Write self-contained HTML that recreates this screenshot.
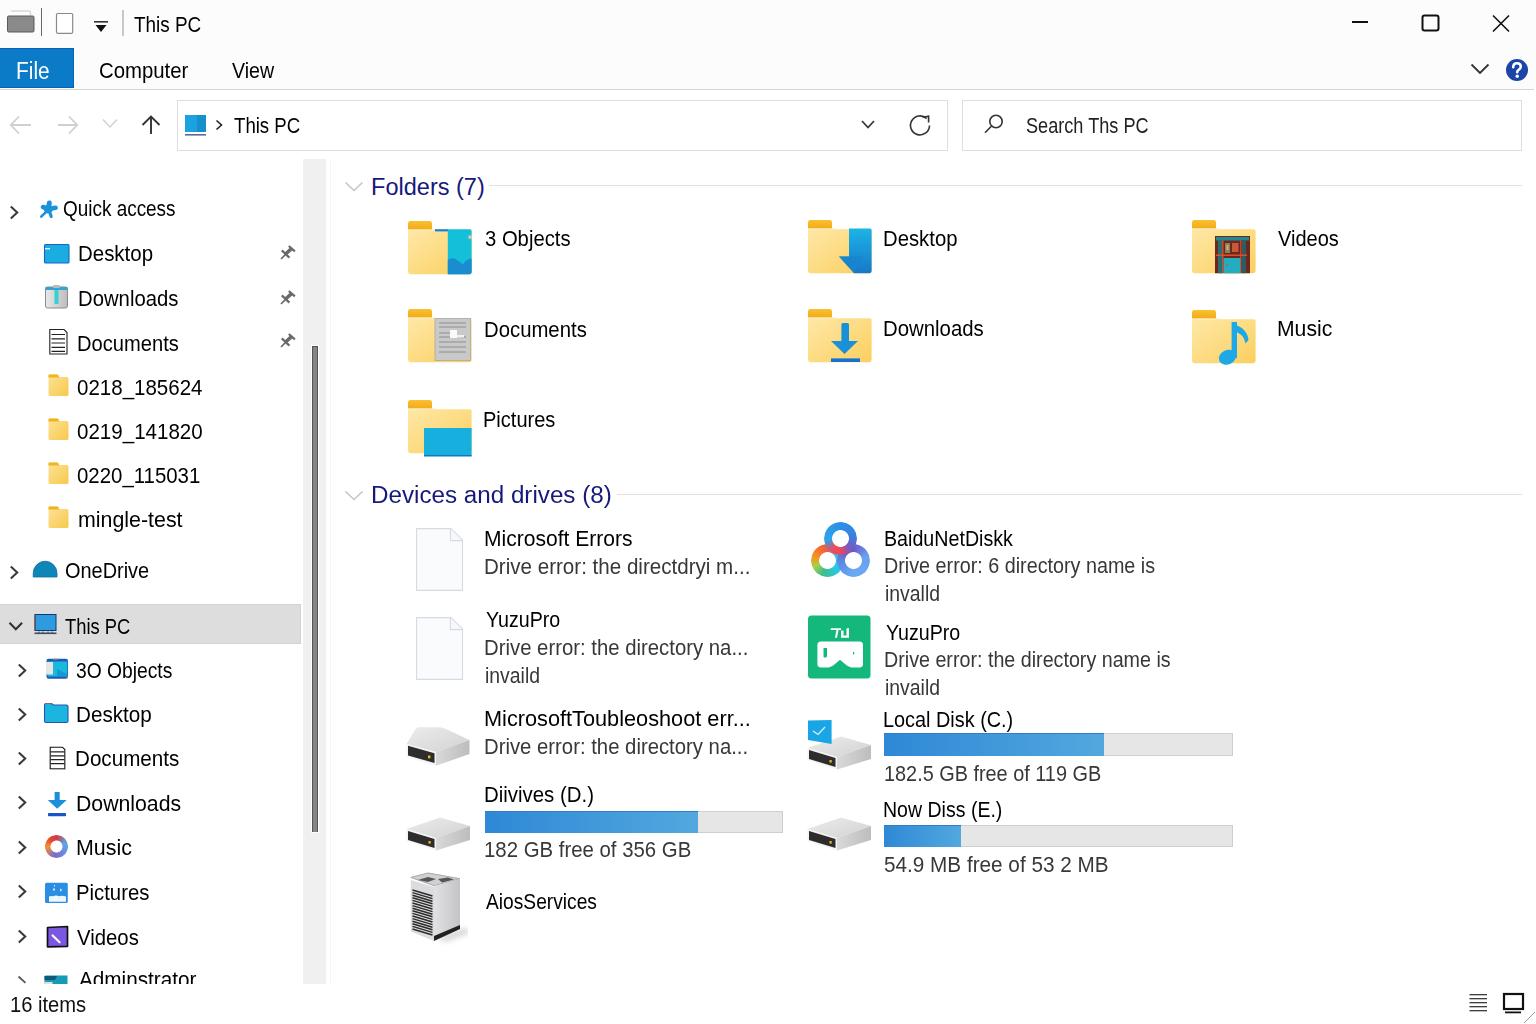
<!DOCTYPE html>
<html><head><meta charset="utf-8"><title>This PC</title>
<style>
html,body{margin:0;padding:0;width:1536px;height:1024px;overflow:hidden;background:#fff;}
body{position:relative;font-family:"Liberation Sans",sans-serif;}
.t{position:absolute;white-space:nowrap;}
.r{position:absolute;display:block;}
</style></head><body>
<div class="r" style="left:0px;top:0px;width:1536px;height:89px;background:#fcfcfc;"></div>
<div class="r" style="left:0px;top:89px;width:1534px;height:1px;background:#d6d6d6;"></div>
<svg class="r" style="left:5px;top:9px;" width="32" height="26" viewBox="0 0 32 26"><path d="M6 2 H24 Q25.5 2 25.5 3.5 V6" fill="none" stroke="#d8d8d8" stroke-width="1.4"/><rect x="2.5" y="7" width="26.5" height="16" rx="1.2" fill="#8a8a8a" stroke="#5a5a5a" stroke-width="1"/></svg>
<div class="r" style="left:41px;top:8px;width:1px;height:28px;background:#666;"></div>
<svg class="r" style="left:54px;top:11px;" width="22" height="24" viewBox="0 0 22 24"><rect x="2.5" y="2.5" width="16.2" height="19.8" rx="1.2" fill="#fff" stroke="#8a8a8a" stroke-width="1.2"/></svg>
<svg class="r" style="left:92px;top:19px;" width="18" height="16" viewBox="0 0 18 16"><rect x="2" y="2" width="14" height="1.6" fill="#333"/><path d="M3.5 6 H14.5 L9 13 Z" fill="#111"/></svg>
<div class="r" style="left:122px;top:10px;width:2px;height:26px;background:#c8c8c8;"></div>
<div class="t " style="left:133.53px;top:15px;font-size:21.5px;line-height:21.5px;color:#000;transform:scaleX(0.8796);transform-origin:0 0;">This PC</div>
<div class="r" style="left:1352px;top:21px;width:16px;height:2px;background:#111;"></div>
<svg class="r" style="left:1419px;top:12px;" width="24" height="22" viewBox="0 0 24 22"><rect x="3.5" y="3.5" width="16" height="15" rx="2" fill="none" stroke="#111" stroke-width="2"/></svg>
<svg class="r" style="left:1490px;top:13px;" width="22" height="22" viewBox="0 0 22 22"><path d="M3 2.5 L19 18.5 M19 2.5 L3 18.5" stroke="#111" stroke-width="1.6" fill="none"/></svg>
<div class="r" style="left:0px;top:48px;width:74px;height:40px;background:#0b7bc8;box-shadow:inset 0 1px #0a5ec0, inset 0 -1px #0a5ec0, inset -1px 0 #0a62c0;"></div>
<div class="t " style="left:16.33px;top:60px;font-size:23px;line-height:23px;color:#fff;transform:scaleX(0.9076);transform-origin:0 0;">File</div>
<div class="t " style="left:98.98px;top:61px;font-size:21.5px;line-height:21.5px;color:#000;transform:scaleX(0.9464);transform-origin:0 0;">Computer</div>
<div class="t " style="left:231.90px;top:61px;font-size:21.5px;line-height:21.5px;color:#000;transform:scaleX(0.9107);transform-origin:0 0;">View</div>
<svg class="r" style="left:1468px;top:60px;" width="24" height="18" viewBox="0 0 24 18"><path d="M3.5 4.5 L12 13 L20.5 4.5" fill="none" stroke="#333" stroke-width="1.8"/></svg>
<svg class="r" style="left:1504px;top:57px;" width="26" height="26" viewBox="0 0 26 26"><circle cx="13" cy="13" r="11" fill="#1b45a6"/><path d="M9.2 10.2 Q9.2 6.2 13 6.2 Q16.8 6.2 16.8 9.6 Q16.8 11.6 14.6 12.8 Q13.2 13.6 13.2 15.2" fill="none" stroke="#fff" stroke-width="2.6" stroke-linecap="round"/><circle cx="13.2" cy="19.3" r="1.7" fill="#fff"/></svg>
<svg class="r" style="left:8px;top:112px;" width="26" height="26" viewBox="0 0 26 26"><path d="M3 13 H23 M11 4.5 L2.8 13 L11 21.5" fill="none" stroke="#cfcfcf" stroke-width="1.8"/></svg>
<svg class="r" style="left:55px;top:112px;" width="26" height="26" viewBox="0 0 26 26"><path d="M3 13 H22 M14 4.5 L22.2 13 L14 21.5" fill="none" stroke="#cfcfcf" stroke-width="1.8"/></svg>
<svg class="r" style="left:100px;top:116px;" width="20" height="16" viewBox="0 0 20 16"><path d="M3 3.5 L10 11 L17 3.5" fill="none" stroke="#d2d2d2" stroke-width="1.5"/></svg>
<svg class="r" style="left:139px;top:113px;" width="24" height="24" viewBox="0 0 24 24"><path d="M12 21 V4 M3.5 12 L12 3.5 L20.5 12" fill="none" stroke="#333" stroke-width="1.9"/></svg>
<div class="r" style="left:177px;top:100px;width:771px;height:51px;background:#fff;box-sizing:border-box;border:1px solid #dedede;"></div>
<svg class="r" style="left:183px;top:113px;" width="26" height="24" viewBox="0 0 26 24"><rect x="2" y="2" width="21" height="17" fill="#1aa3e0"/><rect x="14" y="2" width="9" height="17" fill="#1590cc"/><rect x="2" y="21" width="21" height="1.6" fill="#5a6a9a"/></svg>
<svg class="r" style="left:213px;top:118px;" width="12" height="14" viewBox="0 0 12 14"><path d="M3.5 2.5 L8.5 7 L3.5 11.5" fill="none" stroke="#222" stroke-width="1.6"/></svg>
<div class="t " style="left:233.53px;top:115px;font-size:22px;line-height:22px;color:#000;transform:scaleX(0.8466);transform-origin:0 0;">This PC</div>
<svg class="r" style="left:859px;top:118px;" width="18" height="14" viewBox="0 0 18 14"><path d="M3 3 L9 9.5 L15 3" fill="none" stroke="#333" stroke-width="1.7"/></svg>
<svg class="r" style="left:907px;top:113px;" width="28" height="25" viewBox="0 0 28 25"><path d="M22.5 12.5 A9.5 9.5 0 1 1 19.6 5.6" fill="none" stroke="#333" stroke-width="1.6"/><path d="M15.5 4.2 L21.6 3.2 L21.6 9.6" fill="none" stroke="#333" stroke-width="1.6"/></svg>
<div class="r" style="left:962px;top:100px;width:560px;height:51px;background:#fff;box-sizing:border-box;border:1px solid #dedede;"></div>
<svg class="r" style="left:982px;top:112px;" width="24" height="24" viewBox="0 0 24 24"><circle cx="14" cy="9.5" r="6.2" fill="none" stroke="#333" stroke-width="1.6"/><path d="M9.6 14 L3 20.8" stroke="#333" stroke-width="1.6"/></svg>
<div class="t " style="left:1026.18px;top:116px;font-size:21.5px;line-height:21.5px;color:#222;transform:scaleX(0.8431);transform-origin:0 0;">Search Ths PC</div>
<div class="r" style="left:303px;top:159px;width:23px;height:825px;background:#f0f0f0;"></div>
<div class="r" style="left:311px;top:345px;width:8px;height:488px;background:#fff;"></div>
<div class="r" style="left:312px;top:346px;width:6px;height:486px;background:#858585;box-shadow:inset 1px 0 #555, inset -1px 0 #555, inset 0 1px #555;"></div>
<div class="r" style="left:330px;top:160px;width:1px;height:824px;background:#f4f4f4;"></div>
<div class="r" style="left:0px;top:604px;width:301px;height:40px;background:#dddddd;box-sizing:border-box;border:1px solid #d3d3d3;border-left:0;"></div>
<svg class="r" style="left:8px;top:204px;" width="13" height="18" viewBox="0 0 13 18"><path d="M2.8 2.5 L9.2 8.5 L2.8 14.5" fill="none" stroke="#3a3a3a" stroke-width="2.1"/></svg>
<svg class="r" style="left:34px;top:195px;" width="30" height="30" viewBox="0 0 30 30"><g stroke="#1b93da" stroke-linecap="round" fill="none"><path d="M14.5 14 L15.3 8" stroke-width="5"/><path d="M14.5 14 L9 12" stroke-width="4.6"/><path d="M14.5 14 L21.6 12.8" stroke-width="4.6"/><path d="M13 16 L7.2 21.6" stroke-width="2.6"/><path d="M15 15 L17.2 21.6" stroke-width="3.2"/></g><circle cx="14.3" cy="14.2" r="4.4" fill="#1b93da"/></svg>
<div class="t " style="left:63.15px;top:198px;font-size:22px;line-height:22px;color:#000;transform:scaleX(0.8603);transform-origin:0 0;">Quick access</div>
<svg class="r" style="left:43px;top:243px;" width="28" height="22" viewBox="0 0 28 22"><rect x="1.5" y="1.5" width="24.5" height="18.5" rx="1" fill="#19ade0" stroke="#1f62c6" stroke-width="1.1"/><rect x="2" y="5" width="5" height="1.4" fill="#e8f6fd"/></svg>
<div class="t " style="left:78.36px;top:243px;font-size:22px;line-height:22px;color:#000;transform:scaleX(0.9296);transform-origin:0 0;">Desktop</div>
<svg class="r" style="left:280px;top:245px;" width="16" height="16" viewBox="0 0 16 16"><g stroke="#6a6a6a" stroke-linecap="butt"><path d="M1 14 L6.3 8.6" stroke-width="1.7"/><path d="M1.8 5.4 L9.4 12.6" stroke-width="2.2"/><path d="M5.6 9 L11.8 3.4" stroke-width="3.6"/><path d="M8.8 1 L14.9 6.4" stroke-width="2.2"/></g></svg>
<svg class="r" style="left:44px;top:284px;" width="26" height="26" viewBox="0 0 26 26"><defs><linearGradient id="dlg" x1="0" y1="0" x2="1" y2="0"><stop offset="0" stop-color="#e8e8e8"/><stop offset="1" stop-color="#bdbdbd"/></linearGradient></defs><rect x="1.5" y="3" width="22" height="21" rx="2" fill="url(#dlg)" stroke="#8c8c8c" stroke-width="1"/><rect x="1.5" y="3" width="22" height="3" fill="#3aa0d0"/><rect x="10.5" y="6" width="4" height="14" fill="#36d0d0"/><rect x="9" y="1" width="7" height="3" rx="1" fill="#bbb"/></svg>
<div class="t " style="left:78.38px;top:288px;font-size:22px;line-height:22px;color:#000;transform:scaleX(0.9223);transform-origin:0 0;">Downloads</div>
<svg class="r" style="left:280px;top:290px;" width="16" height="16" viewBox="0 0 16 16"><g stroke="#6a6a6a" stroke-linecap="butt"><path d="M1 14 L6.3 8.6" stroke-width="1.7"/><path d="M1.8 5.4 L9.4 12.6" stroke-width="2.2"/><path d="M5.6 9 L11.8 3.4" stroke-width="3.6"/><path d="M8.8 1 L14.9 6.4" stroke-width="2.2"/></g></svg>
<svg class="r" style="left:48px;top:328px;" width="21" height="28" viewBox="0 0 21 28"><path d="M1.8 1.5 H16 L19 4.5 V26 H1.8 Z" fill="#fff" stroke="#222" stroke-width="1.1"/><path d="M3.5 6.5 H17 M3.5 10.8 H17 M3.5 15 H17 M3.5 19.3 H17 M3.5 23.3 H17" stroke="#222" stroke-width="1.2"/></svg>
<div class="t " style="left:77.39px;top:333px;font-size:22px;line-height:22px;color:#000;transform:scaleX(0.9155);transform-origin:0 0;">Documents</div>
<svg class="r" style="left:280px;top:333px;" width="16" height="16" viewBox="0 0 16 16"><g stroke="#6a6a6a" stroke-linecap="butt"><path d="M1 14 L6.3 8.6" stroke-width="1.7"/><path d="M1.8 5.4 L9.4 12.6" stroke-width="2.2"/><path d="M5.6 9 L11.8 3.4" stroke-width="3.6"/><path d="M8.8 1 L14.9 6.4" stroke-width="2.2"/></g></svg>
<svg class="r" style="left:48px;top:374px;" width="21" height="23" viewBox="0 0 21 23"><defs><linearGradient id="sfg" x1="0" y1="0" x2="1" y2="1"><stop offset="0" stop-color="#fde49a"/><stop offset="1" stop-color="#f7c84a"/></linearGradient></defs><path d="M0.5 1.5 Q0.5 0.5 1.5 0.5 H9 Q10 0.5 10.5 1.5 L11 3 H19 Q20.5 3 20.5 4.5 V20.5 Q20.5 22 19 22 H2 Q0.5 22 0.5 20.5 Z" fill="url(#sfg)"/><path d="M0.5 1.5 Q0.5 0.5 1.5 0.5 H9 Q10 0.5 10.5 1.5 L11 3.5 H0.5 Z" fill="#f2b321"/></svg>
<div class="t " style="left:77.18px;top:377px;font-size:22px;line-height:22px;color:#000;transform:scaleX(0.9324);transform-origin:0 0;">0218_185624</div>
<svg class="r" style="left:48px;top:418px;" width="21" height="23" viewBox="0 0 21 23"><defs><linearGradient id="sfg" x1="0" y1="0" x2="1" y2="1"><stop offset="0" stop-color="#fde49a"/><stop offset="1" stop-color="#f7c84a"/></linearGradient></defs><path d="M0.5 1.5 Q0.5 0.5 1.5 0.5 H9 Q10 0.5 10.5 1.5 L11 3 H19 Q20.5 3 20.5 4.5 V20.5 Q20.5 22 19 22 H2 Q0.5 22 0.5 20.5 Z" fill="url(#sfg)"/><path d="M0.5 1.5 Q0.5 0.5 1.5 0.5 H9 Q10 0.5 10.5 1.5 L11 3.5 H0.5 Z" fill="#f2b321"/></svg>
<div class="t " style="left:77.18px;top:421px;font-size:22px;line-height:22px;color:#000;transform:scaleX(0.9339);transform-origin:0 0;">0219_141820</div>
<svg class="r" style="left:48px;top:462px;" width="21" height="23" viewBox="0 0 21 23"><defs><linearGradient id="sfg" x1="0" y1="0" x2="1" y2="1"><stop offset="0" stop-color="#fde49a"/><stop offset="1" stop-color="#f7c84a"/></linearGradient></defs><path d="M0.5 1.5 Q0.5 0.5 1.5 0.5 H9 Q10 0.5 10.5 1.5 L11 3 H19 Q20.5 3 20.5 4.5 V20.5 Q20.5 22 19 22 H2 Q0.5 22 0.5 20.5 Z" fill="url(#sfg)"/><path d="M0.5 1.5 Q0.5 0.5 1.5 0.5 H9 Q10 0.5 10.5 1.5 L11 3.5 H0.5 Z" fill="#f2b321"/></svg>
<div class="t " style="left:77.18px;top:465px;font-size:22px;line-height:22px;color:#000;transform:scaleX(0.9274);transform-origin:0 0;">0220_115031</div>
<svg class="r" style="left:48px;top:506px;" width="21" height="23" viewBox="0 0 21 23"><defs><linearGradient id="sfg" x1="0" y1="0" x2="1" y2="1"><stop offset="0" stop-color="#fde49a"/><stop offset="1" stop-color="#f7c84a"/></linearGradient></defs><path d="M0.5 1.5 Q0.5 0.5 1.5 0.5 H9 Q10 0.5 10.5 1.5 L11 3 H19 Q20.5 3 20.5 4.5 V20.5 Q20.5 22 19 22 H2 Q0.5 22 0.5 20.5 Z" fill="url(#sfg)"/><path d="M0.5 1.5 Q0.5 0.5 1.5 0.5 H9 Q10 0.5 10.5 1.5 L11 3.5 H0.5 Z" fill="#f2b321"/></svg>
<div class="t " style="left:78.01px;top:509px;font-size:22px;line-height:22px;color:#000;transform:scaleX(0.9713);transform-origin:0 0;">mingle-test</div>
<svg class="r" style="left:8px;top:564px;" width="13" height="18" viewBox="0 0 13 18"><path d="M2.8 2.5 L9.2 8.5 L2.8 14.5" fill="none" stroke="#3a3a3a" stroke-width="2.1"/></svg>
<svg class="r" style="left:32px;top:560px;" width="27" height="19" viewBox="0 0 27 19"><path d="M1.2 17 V13.5 A11.9 12.3 0 0 1 25 13.5 V17 Z" fill="#0f86b8" stroke="#0b6fa0" stroke-width="0.8"/></svg>
<div class="t " style="left:65.10px;top:560px;font-size:22px;line-height:22px;color:#000;transform:scaleX(0.9058);transform-origin:0 0;">OneDrive</div>
<svg class="r" style="left:7px;top:620px;" width="18" height="13" viewBox="0 0 18 13"><path d="M2.5 2.8 L8.8 9.2 L15.1 2.8" fill="none" stroke="#333" stroke-width="2.1"/></svg>
<svg class="r" style="left:33px;top:613px;" width="26" height="24" viewBox="0 0 26 24"><rect x="2" y="1.5" width="21" height="16" fill="#2c9be0" stroke="#0d3a70" stroke-width="1"/><rect x="1.5" y="19.5" width="22" height="1.6" fill="#404a60"/><path d="M6 20 V18.5 M10 20 V18.5 M15 20 V18.5 M19 20 V18.5" stroke="#404a60" stroke-width="1"/><rect x="1" y="2" width="1.2" height="16" fill="#b04020" opacity=".6"/></svg>
<div class="t " style="left:64.54px;top:616px;font-size:22px;line-height:22px;color:#000;transform:scaleX(0.8336);transform-origin:0 0;">This PC</div>
<svg class="r" style="left:16px;top:662px;" width="13" height="18" viewBox="0 0 13 18"><path d="M2.8 2.5 L9.2 8.5 L2.8 14.5" fill="none" stroke="#3a3a3a" stroke-width="2.1"/></svg>
<svg class="r" style="left:45px;top:657px;" width="24" height="23" viewBox="0 0 24 23"><rect x="1.5" y="1.8" width="21.5" height="20" rx="2" fill="#1a5cb8"/><rect x="2.5" y="4.5" width="19.8" height="15" fill="#17b9dc"/><rect x="1" y="5" width="7" height="12.5" fill="#e6e6e6"/><path d="M12 12 L22.3 17 V19.5 H12 Z" fill="#1690d0" opacity=".8"/><path d="M20.5 21.8 L23 19.5 V21.8 Z" fill="#f0a050"/><rect x="8" y="1.5" width="5" height="1" fill="#e0a070"/></svg>
<div class="t " style="left:76.23px;top:660px;font-size:22px;line-height:22px;color:#000;transform:scaleX(0.8749);transform-origin:0 0;">3O Objects</div>
<svg class="r" style="left:16px;top:706px;" width="13" height="18" viewBox="0 0 13 18"><path d="M2.8 2.5 L9.2 8.5 L2.8 14.5" fill="none" stroke="#3a3a3a" stroke-width="2.1"/></svg>
<svg class="r" style="left:43px;top:702px;" width="27" height="22" viewBox="0 0 27 22"><path d="M1.5 3 Q1.5 1.5 3 1.5 H8.5 L10.5 3 H23.5 Q25 3 25 4.5 V19 Q25 20.5 23.5 20.5 H3 Q1.5 20.5 1.5 19 Z" fill="#1ab6e0" stroke="#2a56aa" stroke-width="1.1"/><path d="M2.2 1.6 H8" stroke="#c0602a" stroke-width="1"/></svg>
<div class="t " style="left:76.35px;top:704px;font-size:22px;line-height:22px;color:#000;transform:scaleX(0.9399);transform-origin:0 0;">Desktop</div>
<svg class="r" style="left:16px;top:750px;" width="13" height="18" viewBox="0 0 13 18"><path d="M2.8 2.5 L9.2 8.5 L2.8 14.5" fill="none" stroke="#3a3a3a" stroke-width="2.1"/></svg>
<svg class="r" style="left:48px;top:745px;" width="19" height="26" viewBox="0 0 19 26"><path d="M2.2 2.2 H14.5 L16.8 4.5 V23.8 H2.2 Z" fill="#fff" stroke="#111" stroke-width="1.1"/><path d="M16.8 4 V23.8 H3" fill="none" stroke="#aaa" stroke-width="0.8" transform="translate(0.6 0.6)"/><path d="M2.5 6.8 H16.5 M2.5 10.8 H16.5 M2.5 14.7 H16.5 M2.5 18.6 H16.5" stroke="#222" stroke-width="1.2"/></svg>
<div class="t " style="left:75.35px;top:748px;font-size:22px;line-height:22px;color:#000;transform:scaleX(0.9376);transform-origin:0 0;">Documents</div>
<svg class="r" style="left:16px;top:794px;" width="13" height="18" viewBox="0 0 13 18"><path d="M2.8 2.5 L9.2 8.5 L2.8 14.5" fill="none" stroke="#3a3a3a" stroke-width="2.1"/></svg>
<svg class="r" style="left:46px;top:790px;" width="23" height="28" viewBox="0 0 23 28"><rect x="8.6" y="2" width="5.1" height="9" fill="#1a90dc"/><path d="M1.8 10 H20.7 L11.2 18.8 Z" fill="#1a90dc"/><rect x="2" y="23" width="18" height="3.2" rx="0.8" fill="#1a55c8"/></svg>
<div class="t " style="left:76.30px;top:793px;font-size:22px;line-height:22px;color:#000;transform:scaleX(0.9656);transform-origin:0 0;">Downloads</div>
<svg class="r" style="left:16px;top:839px;" width="13" height="18" viewBox="0 0 13 18"><path d="M2.8 2.5 L9.2 8.5 L2.8 14.5" fill="none" stroke="#3a3a3a" stroke-width="2.1"/></svg>
<div class="r" style="left:45px;top:835px;width:23px;height:22.5px;border-radius:50%;background:conic-gradient(#d03a48 0deg,#5aa8e8 70deg,#6a90e0 120deg,#7a6ad0 190deg,#f59030 270deg,#e8452c 320deg,#d03a48 360deg);-webkit-mask:radial-gradient(circle at center, transparent 5.6px, #000 6.4px);mask:radial-gradient(circle at center, transparent 5.6px, #000 6.4px);"></div>
<div class="t " style="left:76.29px;top:837px;font-size:22px;line-height:22px;color:#000;transform:scaleX(0.9726);transform-origin:0 0;">Music</div>
<svg class="r" style="left:16px;top:883px;" width="13" height="18" viewBox="0 0 13 18"><path d="M2.8 2.5 L9.2 8.5 L2.8 14.5" fill="none" stroke="#3a3a3a" stroke-width="2.1"/></svg>
<svg class="r" style="left:43px;top:880px;" width="26" height="25" viewBox="0 0 26 25"><rect x="2" y="2.7" width="22.8" height="20.3" rx="1.5" fill="#2a8fe4"/><path d="M6 16.5 Q8 15.5 10 16.3 Q13 15 16 16.2 Q19 15.4 23 16.5 V21.8 H6 Z" fill="#eef6fc"/><rect x="10" y="8.5" width="2" height="2" fill="#cfe8fa"/><rect x="17" y="8.8" width="1.6" height="2.4" fill="#cfe8fa"/><rect x="11" y="5" width="1" height="1.5" fill="#cfe8fa"/></svg>
<div class="t " style="left:76.37px;top:882px;font-size:22px;line-height:22px;color:#000;transform:scaleX(0.9234);transform-origin:0 0;">Pictures</div>
<svg class="r" style="left:16px;top:928px;" width="13" height="18" viewBox="0 0 13 18"><path d="M2.8 2.5 L9.2 8.5 L2.8 14.5" fill="none" stroke="#3a3a3a" stroke-width="2.1"/></svg>
<svg class="r" style="left:45px;top:924px;" width="25" height="25" viewBox="0 0 25 25"><path d="M2.5 3.5 L22.5 2.5 V22.3 L2.5 22.8 Z" fill="#7a58e2" stroke="#111" stroke-width="1.7" stroke-linejoin="round"/><path d="M7.6 11.5 L14.6 18.2" stroke="#fff" stroke-width="2.2" stroke-linecap="round"/></svg>
<div class="t " style="left:76.90px;top:927px;font-size:22px;line-height:22px;color:#000;transform:scaleX(0.9242);transform-origin:0 0;">Videos</div>
<div class="r" style="left:0;top:964px;width:303px;height:20px;overflow:hidden;">
<svg class="r" style="left:16px;top:10px;" width="12" height="12" viewBox="0 0 12 12"><path d="M2.5 2.5 L9.5 8.8" stroke="#555" stroke-width="1.7"/></svg>
<svg class="r" style="left:43px;top:10px;" width="27" height="12" viewBox="0 0 27 12"><path d="M1.5 2.5 Q1.5 1.5 3 1.5 H24.5 V12 H1.5 Z" fill="#159ab8"/><path d="M1.5 2 H14 L12 6 H1.5 Z" fill="#0d5a78"/><rect x="1.5" y="8" width="8" height="4" fill="#e8e0d8"/></svg>
</div>
<div class="r" style="left:0;top:964px;width:303px;height:20px;overflow:hidden;">
<div class="t " style="left:78.90px;top:5px;font-size:22px;line-height:22px;color:#000;transform:scaleX(0.9421);transform-origin:0 0;">Adminstrator</div>
</div>
<div class="t " style="left:10.49px;top:995px;font-size:21.5px;line-height:21.5px;color:#111;transform:scaleX(0.9378);transform-origin:0 0;">16 items</div>
<svg class="r" style="left:1467px;top:992px;" width="22" height="22" viewBox="0 0 22 22"><path d="M2.5 2.8 H20 M2.5 6.8 H20 M2.5 10.8 H20 M2.5 14.7 H20 M2.5 18.7 H20" stroke="#000" stroke-width="1.05"/></svg>
<svg class="r" style="left:1501px;top:991px;" width="25" height="24" viewBox="0 0 25 24"><rect x="3" y="3" width="19" height="15" fill="#fff" stroke="#111" stroke-width="2.2"/><rect x="4" y="20.5" width="16" height="1.8" fill="#111"/></svg>
<svg class="r" style="left:343px;top:180px;" width="22" height="14" viewBox="0 0 22 14"><path d="M2.5 2.5 L11 10.5 L19.5 2.5" fill="none" stroke="#c4c4c4" stroke-width="1.5"/></svg>
<div class="t " style="left:371.12px;top:176px;font-size:23.5px;line-height:23.5px;color:#15197a;">Folders (7)</div>
<div class="r" style="left:489px;top:185px;width:1033px;height:1px;background:#e2e2e2;"></div>
<svg class="r" style="left:343px;top:489px;" width="22" height="14" viewBox="0 0 22 14"><path d="M2.5 2.5 L11 10.5 L19.5 2.5" fill="none" stroke="#c4c4c4" stroke-width="1.5"/></svg>
<div class="t " style="left:371.06px;top:484px;font-size:23.5px;line-height:23.5px;color:#15197a;transform:scaleX(1.0299);transform-origin:0 0;">Devices and drives (8)</div>
<div class="r" style="left:617px;top:494px;width:905px;height:1px;background:#e2e2e2;"></div>
<svg width="0" height="0" style="position:absolute"><defs><linearGradient id="fb" x1="0" y1="0" x2="1" y2="1"><stop offset="0" stop-color="#fee8a8"/><stop offset="1" stop-color="#fbcf5e"/></linearGradient><linearGradient id="ft" x1="0" y1="0" x2="0" y2="1"><stop offset="0" stop-color="#f9c030"/><stop offset="1" stop-color="#f3a918"/></linearGradient><linearGradient id="bl" x1="0" y1="0" x2="0" y2="1"><stop offset="0" stop-color="#1cb4e6"/><stop offset="1" stop-color="#1778c8"/></linearGradient></defs></svg>
<svg class="r" style="left:408px;top:221px;" width="66" height="58" viewBox="0 0 66 58"><path d="M0 2.5 Q0 0 2.5 0 H21.5 Q24 0 24 2.5 V9 H0 Z" fill="url(#ft)"/><path d="M0 8.5 H27 L28 9.2 H62 Q63.6 9.2 63.6 10.8 V50.8 Q63.6 53.2 61.2 53.2 H2.4 Q0 53.2 0 50.8 Z" fill="url(#fb)"/><path d="M0 9 H26.5" stroke="#fdf0c8" stroke-width="1"/><path d="M27 8.6 H40 V53.2 H27 Z" fill="none"/><rect x="27" y="8.2" width="13" height="2.2" fill="#1a80d6"/><path d="M39.8 8.2 H62 Q63.6 8.2 63.6 9.8 V51 Q63.6 53.2 61.4 53.2 H39.8 Z" fill="#14bfd9"/><path d="M39.8 39 Q44 36 48 38.5 Q52 41 55 43.5 Q58 38 63.6 37.5 V51 Q63.6 53.2 61.4 53.2 H39.8 Z" fill="#1a8dd0"/><rect x="60.5" y="14.5" width="3.2" height="3.2" fill="#f4c79c"/></svg>
<div class="t " style="left:485.19px;top:228px;font-size:22px;line-height:22px;color:#000;transform:scaleX(0.9200);transform-origin:0 0;">3 Objects</div>
<svg class="r" style="left:808px;top:220px;" width="66" height="58" viewBox="0 0 66 58"><path d="M0 2.5 Q0 0 2.5 0 H21.5 Q24 0 24 2.5 V9 H0 Z" fill="url(#ft)"/><path d="M0 8.5 H27 L28 9.2 H62 Q63.6 9.2 63.6 10.8 V50.8 Q63.6 53.2 61.2 53.2 H2.4 Q0 53.2 0 50.8 Z" fill="url(#fb)"/><path d="M0 9 H26.5" stroke="#fdf0c8" stroke-width="1"/><path d="M41 8.4 H62 Q63.6 8.4 63.6 10 V51 Q63.6 53.2 61.4 53.2 H46.2 L31 36.6 H41 Z" fill="url(#bl)"/><path d="M31 36.6 H55 L46.2 53.2 Z" fill="#1a84cc" opacity=".85"/></svg>
<div class="t " style="left:883.38px;top:228px;font-size:22px;line-height:22px;color:#000;transform:scaleX(0.9232);transform-origin:0 0;">Desktop</div>
<svg class="r" style="left:1192px;top:220px;" width="66" height="58" viewBox="0 0 66 58"><path d="M0 2.5 Q0 0 2.5 0 H21.5 Q24 0 24 2.5 V9 H0 Z" fill="url(#ft)"/><path d="M0 8.5 H27 L28 9.2 H62 Q63.6 9.2 63.6 10.8 V50.8 Q63.6 53.2 61.2 53.2 H2.4 Q0 53.2 0 50.8 Z" fill="url(#fb)"/><path d="M0 9 H26.5" stroke="#fdf0c8" stroke-width="1"/><rect x="23" y="16" width="35" height="37.2" fill="#6e2620"/><rect x="24" y="17" width="33" height="3.5" fill="#1e8a90"/><rect x="26" y="20" width="4" height="33.2" fill="#2a6e70"/><rect x="50" y="20" width="4" height="33.2" fill="#2a5e60"/><rect x="30" y="20" width="1.5" height="33" fill="#d04a30"/><rect x="48" y="20" width="1.5" height="33" fill="#c04030"/><rect x="33" y="23" width="5" height="10" fill="#8a8060"/><rect x="34.5" y="25" width="2" height="5" fill="#d8b060"/><rect x="40" y="23" width="6.5" height="9" fill="#c8583a"/><rect x="24" y="34.5" width="31" height="1.5" fill="#d8502a"/><rect x="31.5" y="38" width="17" height="15.2" fill="#22aebe"/><circle cx="35" cy="45" r="0.9" fill="#e05030"/></svg>
<div class="t " style="left:1277.90px;top:228px;font-size:22px;line-height:22px;color:#000;transform:scaleX(0.9091);transform-origin:0 0;">Videos</div>
<svg class="r" style="left:408px;top:309px;" width="66" height="58" viewBox="0 0 66 58"><path d="M0 2.5 Q0 0 2.5 0 H21.5 Q24 0 24 2.5 V9 H0 Z" fill="url(#ft)"/><path d="M0 8.5 H27 L28 9.2 H62 Q63.6 9.2 63.6 10.8 V50.8 Q63.6 53.2 61.2 53.2 H2.4 Q0 53.2 0 50.8 Z" fill="url(#fb)"/><path d="M0 9 H26.5" stroke="#fdf0c8" stroke-width="1"/><rect x="27" y="9.5" width="35.6" height="42" fill="#c9c9c9"/><rect x="27" y="9.5" width="35.6" height="42" fill="none" stroke="#a9a9a9" stroke-width=".8"/><path d="M31 14 H58 M31 18 H58 M31 24 H48 M31 28 H58 M31 33 H58 M31 38 H58 M31 43 H58" stroke="#8e8e8e" stroke-width="1"/><rect x="42" y="21" width="7" height="8" fill="#fafafa"/><rect x="49" y="26" width="7" height="2.5" fill="#f2f2f2"/></svg>
<div class="t " style="left:484.37px;top:319px;font-size:22px;line-height:22px;color:#000;transform:scaleX(0.9238);transform-origin:0 0;">Documents</div>
<svg class="r" style="left:808px;top:309px;" width="66" height="58" viewBox="0 0 66 58"><path d="M0 2.5 Q0 0 2.5 0 H21.5 Q24 0 24 2.5 V9 H0 Z" fill="url(#ft)"/><path d="M0 8.5 H27 L28 9.2 H62 Q63.6 9.2 63.6 10.8 V50.8 Q63.6 53.2 61.2 53.2 H2.4 Q0 53.2 0 50.8 Z" fill="url(#fb)"/><path d="M0 9 H26.5" stroke="#fdf0c8" stroke-width="1"/><rect x="33.4" y="14" width="7.6" height="20" rx="1.5" fill="#1a90d8"/><path d="M23 32 H50 L36.5 45 Z" fill="#1a90d8"/><rect x="23" y="49.4" width="29" height="3.6" fill="#1a6fd0"/></svg>
<div class="t " style="left:883.37px;top:318px;font-size:22px;line-height:22px;color:#000;transform:scaleX(0.9260);transform-origin:0 0;">Downloads</div>
<svg class="r" style="left:1192px;top:310px;" width="66" height="58" viewBox="0 0 66 58"><path d="M0 2.5 Q0 0 2.5 0 H21.5 Q24 0 24 2.5 V9 H0 Z" fill="url(#ft)"/><path d="M0 8.5 H27 L28 9.2 H62 Q63.6 9.2 63.6 10.8 V50.8 Q63.6 53.2 61.2 53.2 H2.4 Q0 53.2 0 50.8 Z" fill="url(#fb)"/><path d="M0 9 H26.5" stroke="#fdf0c8" stroke-width="1"/><rect x="39.6" y="12" width="5.4" height="36" fill="#1fa8e6"/><path d="M42 14.5 Q55 18 56.5 30 L53.5 33.5 Q52 24 42 21 Z" fill="#1fa8e6"/><ellipse cx="35.5" cy="47.2" rx="9" ry="7.2" transform="rotate(-25 35.5 47.2)" fill="#1fa8e6"/></svg>
<div class="t " style="left:1277.31px;top:318px;font-size:22px;line-height:22px;color:#000;transform:scaleX(0.9617);transform-origin:0 0;">Music</div>
<svg class="r" style="left:408px;top:400px;" width="66" height="58" viewBox="0 0 66 58"><path d="M0 2.5 Q0 0 2.5 0 H21.5 Q24 0 24 2.5 V9 H0 Z" fill="url(#ft)"/><path d="M0 8.5 H27 L28 9.2 H62 Q63.6 9.2 63.6 10.8 V50.8 Q63.6 53.2 61.2 53.2 H2.4 Q0 53.2 0 50.8 Z" fill="url(#fb)"/><path d="M0 9 H26.5" stroke="#fdf0c8" stroke-width="1"/><rect x="16" y="28" width="47.6" height="28.2" fill="#17b0de"/><rect x="16" y="55" width="47.6" height="1.4" fill="#1178c0"/></svg>
<div class="t " style="left:483.40px;top:409px;font-size:22px;line-height:22px;color:#000;transform:scaleX(0.9104);transform-origin:0 0;">Pictures</div>
<svg width="0" height="0" style="position:absolute"><defs><linearGradient id="dtop" x1="0" y1="0" x2="1" y2="1"><stop offset="0" stop-color="#ececec"/><stop offset="1" stop-color="#d2d2d2"/></linearGradient><linearGradient id="dside" x1="0" y1="0" x2="1" y2="0"><stop offset="0" stop-color="#d9d9d9"/><stop offset="1" stop-color="#bdbdbd"/></linearGradient><linearGradient id="pbar" x1="0" y1="0" x2="1" y2="0"><stop offset="0" stop-color="#2b86d6"/><stop offset="1" stop-color="#4aa6dc"/></linearGradient><linearGradient id="srv" x1="0" y1="0" x2="1" y2="0"><stop offset="0" stop-color="#e2e2e4"/><stop offset="1" stop-color="#c4c4c8"/></linearGradient><linearGradient id="pg" x1="0" y1="0" x2="1" y2="1"><stop offset="0" stop-color="#fbfbfd"/><stop offset="1" stop-color="#f0f1f4"/></linearGradient></defs></svg>
<svg class="r" style="left:416px;top:528px;" width="48" height="64" viewBox="0 0 48 64"><path d="M0.6 0.6 H35 L46.5 12 V62.4 H0.6 Z" fill="#fafbfd" stroke="#d6dae3" stroke-width="1.1"/><path d="M34.4 0.8 V12.6 H46.3" fill="#f6f7fa" stroke="#d6dae3" stroke-width="1.1"/></svg>
<div class="t " style="left:484.32px;top:529px;font-size:21.5px;line-height:21.5px;color:#000;transform:scaleX(0.9785);transform-origin:0 0;">Microsoft Errors</div>
<div class="t " style="left:484.35px;top:557px;font-size:21.5px;line-height:21.5px;color:#383838;transform:scaleX(0.9568);transform-origin:0 0;">Drive error: the directdryi m...</div>
<svg class="r" style="left:416px;top:617px;" width="48" height="64" viewBox="0 0 48 64"><path d="M0.6 0.6 H35 L46.5 12 V62.4 H0.6 Z" fill="#fafbfd" stroke="#d6dae3" stroke-width="1.1"/><path d="M34.4 0.8 V12.6 H46.3" fill="#f6f7fa" stroke="#d6dae3" stroke-width="1.1"/></svg>
<div class="t " style="left:485.51px;top:610px;font-size:21.5px;line-height:21.5px;color:#000;transform:scaleX(0.9140);transform-origin:0 0;">YuzuPro</div>
<div class="t " style="left:484.37px;top:638px;font-size:21.5px;line-height:21.5px;color:#383838;transform:scaleX(0.9455);transform-origin:0 0;">Drive error: the directory na...</div>
<div class="t " style="left:484.74px;top:666px;font-size:21.5px;line-height:21.5px;color:#383838;transform:scaleX(0.9027);transform-origin:0 0;">invaild</div>
<svg class="r" style="left:406px;top:726px;" width="66" height="44" viewBox="0 0 66 44"><path d="M0.5 18 L9.5 3 Q10.5 1.2 13 1.2 H33.7 Q36 1.2 40 3 L63.5 14 L30 26 Z" fill="url(#dtop)"/><path d="M30 26 L63.5 14 V28 L30 39.8 Z" fill="url(#dside)"/><path d="M0.5 18 L30 26 V39.8 L0.5 31 Z" fill="#f4f4f4"/><path d="M2 19.8 L28.5 27.2 V37 L2 29.5 Z" fill="#2d2d2d"/><rect x="22" y="29.5" width="2.4" height="2.8" fill="#f2b620"/></svg>
<div class="t " style="left:484.26px;top:709px;font-size:21.5px;line-height:21.5px;color:#000;transform:scaleX(1.0101);transform-origin:0 0;">MicrosoftToubleoshoot err...</div>
<div class="t " style="left:484.38px;top:737px;font-size:21.5px;line-height:21.5px;color:#383838;transform:scaleX(0.9447);transform-origin:0 0;">Drive error: the directory na...</div>
<svg class="r" style="left:406px;top:817px;" width="66" height="44" viewBox="0 0 66 44"><path d="M0.5 12 L34 0.5 L64 9 L30 21 Z" fill="url(#dtop)"/><path d="M30 21 L64 9 V23 L30 33.5 Z" fill="url(#dside)"/><path d="M0.5 12 L30 21 V33.5 L0.5 24 Z" fill="#f4f4f4"/><path d="M2 14 L28.5 22 V31 L2 23 Z" fill="#2d2d2d"/><rect x="22.5" y="24" width="2.2" height="2.6" fill="#f2b620"/></svg>
<div class="t " style="left:484.37px;top:785px;font-size:21.5px;line-height:21.5px;color:#000;transform:scaleX(0.9489);transform-origin:0 0;">Diivives (D.)</div>
<div class="r" style="left:485px;top:811px;width:298px;height:22px;background:#e6e6e6;box-sizing:border-box;border:1px solid #cfcfcf;"></div>
<div class="r" style="left:485px;top:811px;width:213px;height:22px;background:linear-gradient(90deg,#2f88d6,#52a8de);box-shadow:inset 0 1px #2f7cc8;"></div>
<div class="t " style="left:484.47px;top:840px;font-size:21.5px;line-height:21.5px;color:#383838;transform:scaleX(0.9474);transform-origin:0 0;">182 GB free of 356 GB</div>
<svg class="r" style="left:406px;top:870px;" width="62" height="76" viewBox="0 0 62 76"><defs><filter id="sh" x="-50%" y="-50%" width="200%" height="200%"><feGaussianBlur stdDeviation="2.5"/></filter></defs><path d="M30 68 L58 58 L66 62 L40 72 Z" fill="#c8c8c8" filter="url(#sh)" opacity=".7"/><path d="M4.8 7.4 L22 3 L54 8.7 L28 15.7 Z" fill="#cfd0d2" stroke="#a8a8aa" stroke-width="1"/><path d="M12 10 L22 7 L30 9 L22 12 Z M32 9 L42 7.5 L48 9.5 L36 12.5 Z" fill="#555"/><path d="M4.8 10 L28 17 V71 L4.8 61.4 Z" fill="#dcdcde"/><path d="M28 16 L54 9 V58 L28 70 Z" fill="url(#srv)"/><path d="M28 66 L54 55 V59 L28 71 Z" fill="#222"/><path d="M6.5 20.0 L26.5 26.0" stroke="#2b2b2b" stroke-width="1.5"/><path d="M6.5 22.6 L26.5 28.6" stroke="#2b2b2b" stroke-width="1.5"/><path d="M6.5 25.2 L26.5 31.2" stroke="#2b2b2b" stroke-width="1.5"/><path d="M6.5 27.8 L26.5 33.8" stroke="#2b2b2b" stroke-width="1.5"/><path d="M6.5 30.4 L26.5 36.4" stroke="#2b2b2b" stroke-width="1.5"/><path d="M6.5 33.0 L26.5 39.0" stroke="#2b2b2b" stroke-width="1.5"/><path d="M6.5 35.6 L26.5 41.6" stroke="#2b2b2b" stroke-width="1.5"/><path d="M6.5 38.2 L26.5 44.2" stroke="#2b2b2b" stroke-width="1.5"/><path d="M6.5 40.8 L26.5 46.8" stroke="#2b2b2b" stroke-width="1.5"/><path d="M6.5 43.4 L26.5 49.4" stroke="#2b2b2b" stroke-width="1.5"/><path d="M6.5 46.0 L26.5 52.0" stroke="#2b2b2b" stroke-width="1.5"/><path d="M6.5 48.6 L26.5 54.6" stroke="#2b2b2b" stroke-width="1.5"/><path d="M6.5 51.2 L26.5 57.2" stroke="#2b2b2b" stroke-width="1.5"/><path d="M6.5 53.8 L26.5 59.8" stroke="#2b2b2b" stroke-width="1.5"/><path d="M6.5 56.4 L26.5 62.4" stroke="#2b2b2b" stroke-width="1.5"/><path d="M6.5 59.0 L26.5 65.0" stroke="#2b2b2b" stroke-width="1.5"/></svg>
<div class="t " style="left:486.30px;top:892px;font-size:21.5px;line-height:21.5px;color:#000;transform:scaleX(0.8930);transform-origin:0 0;">AiosServices</div>
<div class="r" style="left:810.8px;top:544.0px;width:33.2px;height:33.2px;border-radius:50%;background:conic-gradient(#f05a48 0deg, #34bff0 60deg, #28c8e8 130deg, #3cbf8a 200deg, #a8d048 245deg, #f7941d 285deg, #f56a38 330deg, #f05a48 360deg);-webkit-mask:radial-gradient(circle at center, transparent 8.0px, #000 8.8px);mask:radial-gradient(circle at center, transparent 8.0px, #000 8.8px);"></div>
<div class="r" style="left:836.5px;top:544.0px;width:33.2px;height:33.2px;border-radius:50%;background:conic-gradient(#6a58c8 0deg, #6aa0f0 70deg, #6aaaf2 180deg, #5a86e2 270deg, #7058c0 320deg, #6a58c8 360deg);-webkit-mask:radial-gradient(circle at center, transparent 8.0px, #000 8.8px);mask:radial-gradient(circle at center, transparent 8.0px, #000 8.8px);"></div>
<div class="r" style="left:824.1px;top:521.6px;width:33.2px;height:33.2px;border-radius:50%;background:conic-gradient(#2d8fe8 0deg, #3a7fe0 80deg, #7a58c0 135deg, #f0485a 185deg, #f04a5a 215deg, #2aa6ea 265deg, #2d8fe8 360deg);-webkit-mask:radial-gradient(circle at center, transparent 8.0px, #000 8.8px);mask:radial-gradient(circle at center, transparent 8.0px, #000 8.8px);"></div>
<div class="t " style="left:884.43px;top:529px;font-size:21.5px;line-height:21.5px;color:#000;transform:scaleX(0.9144);transform-origin:0 0;">BaiduNetDiskk</div>
<div class="t " style="left:884.42px;top:556px;font-size:21.5px;line-height:21.5px;color:#383838;transform:scaleX(0.9186);transform-origin:0 0;">Drive error: 6 directory name is</div>
<div class="t " style="left:884.74px;top:584px;font-size:21.5px;line-height:21.5px;color:#383838;transform:scaleX(0.9027);transform-origin:0 0;">invalld</div>
<svg class="r" style="left:808px;top:615px;" width="63" height="64" viewBox="0 0 63 64"><rect x="0" y="0.4" width="62.5" height="63.2" rx="3.5" fill="#13b87a"/><path d="M9.4 30 Q9.4 26.5 13 26.5 H51.5 Q55 26.5 55 30 V49 Q55 52.4 51.5 52.4 H44 Q41 52.4 37 49 L32.5 45.2 Q32 44.8 31.5 45.2 L27 49 Q23 52.4 20 52.4 H13 Q9.4 52.4 9.4 49 Z" fill="#fff"/><path d="M22.7 13.2 H33 V15 H30.5 L29 22.8 H27 L28.4 15 H22.7 Z M33 15.5 H35.5 V20.5 H38.5 V13.2 H41 V22.8 H33 Z" fill="#fff"/><path d="M15.5 33 H19 V41 Q19 42.5 17.5 42.5 H16 Q15.5 42.5 15.5 41 Z" fill="#13b87a"/><rect x="45" y="37" width="1.2" height="2.5" fill="#13b87a"/></svg>
<div class="t " style="left:885.51px;top:623px;font-size:21.5px;line-height:21.5px;color:#000;transform:scaleX(0.9140);transform-origin:0 0;">YuzuPro</div>
<div class="t " style="left:884.42px;top:650px;font-size:21.5px;line-height:21.5px;color:#383838;transform:scaleX(0.9157);transform-origin:0 0;">Drive error: the directory name is</div>
<div class="t " style="left:884.74px;top:678px;font-size:21.5px;line-height:21.5px;color:#383838;transform:scaleX(0.9027);transform-origin:0 0;">invaild</div>
<svg class="r" style="left:807px;top:736px;" width="66" height="44" viewBox="0 0 66 44"><path d="M0.5 12 L34 0.5 L64 9 L30 21 Z" fill="url(#dtop)"/><path d="M30 21 L64 9 V23 L30 33.5 Z" fill="url(#dside)"/><path d="M0.5 12 L30 21 V33.5 L0.5 24 Z" fill="#f4f4f4"/><path d="M2 14 L28.5 22 V31 L2 23 Z" fill="#2d2d2d"/><rect x="22.5" y="24" width="2.2" height="2.6" fill="#f2b620"/></svg>
<svg class="r" style="left:806px;top:718px;" width="28" height="28" viewBox="0 0 28 28"><path d="M2 2.5 L25.6 2 V26 L2 22 Z" fill="#1aa6e4"/><path d="M7 13 L12 16.5 L19 9" fill="none" stroke="#d8f2fc" stroke-width="1.3"/></svg>
<div class="t " style="left:883.41px;top:710px;font-size:21.5px;line-height:21.5px;color:#000;transform:scaleX(0.9237);transform-origin:0 0;">Local Disk (C.)</div>
<div class="r" style="left:884px;top:733px;width:349px;height:23px;background:#e6e6e6;box-sizing:border-box;border:1px solid #cfcfcf;"></div>
<div class="r" style="left:884px;top:733px;width:220px;height:23px;background:linear-gradient(90deg,#2f88d6,#52a8de);box-shadow:inset 0 1px #2f7cc8;"></div>
<div class="t " style="left:883.51px;top:764px;font-size:21.5px;line-height:21.5px;color:#383838;transform:scaleX(0.9238);transform-origin:0 0;">182.5 GB free of 119 GB</div>
<svg class="r" style="left:807px;top:817px;" width="66" height="44" viewBox="0 0 66 44"><path d="M0.5 12 L34 0.5 L64 9 L30 21 Z" fill="url(#dtop)"/><path d="M30 21 L64 9 V23 L30 33.5 Z" fill="url(#dside)"/><path d="M0.5 12 L30 21 V33.5 L0.5 24 Z" fill="#f4f4f4"/><path d="M2 14 L28.5 22 V31 L2 23 Z" fill="#2d2d2d"/><rect x="22.5" y="24" width="2.2" height="2.6" fill="#f2b620"/></svg>
<div class="t " style="left:883.44px;top:800px;font-size:21.5px;line-height:21.5px;color:#000;transform:scaleX(0.9084);transform-origin:0 0;">Now Diss (E.)</div>
<div class="r" style="left:884px;top:825px;width:349px;height:22px;background:#e6e6e6;box-sizing:border-box;border:1px solid #cfcfcf;"></div>
<div class="r" style="left:884px;top:825px;width:77px;height:22px;background:linear-gradient(90deg,#2f88d6,#52a8de);box-shadow:inset 0 1px #2f7cc8;"></div>
<div class="t " style="left:884.17px;top:855px;font-size:21.5px;line-height:21.5px;color:#383838;transform:scaleX(0.9636);transform-origin:0 0;">54.9 MB free of 53 2 MB</div>
<svg class="r" style="left:1518px;top:1006px;" width="18" height="18" viewBox="0 0 18 18"><path d="M17 6 L6 17" stroke="#9a9a9a" stroke-width="1"/></svg>
</body></html>
